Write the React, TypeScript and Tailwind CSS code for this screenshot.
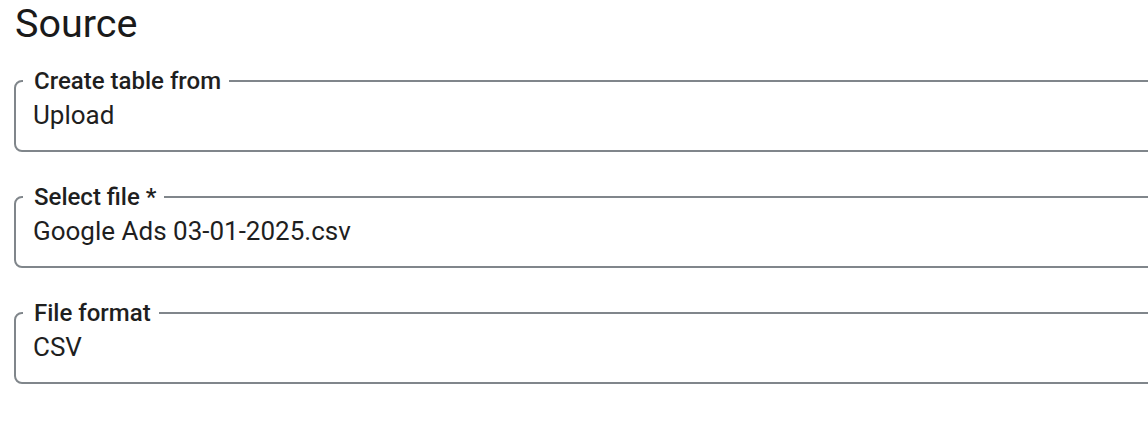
import React from 'react';

const fields = [
  { label: 'Create table from', value: 'Upload' },
  { label: 'Select file *', value: 'Google Ads 03-01-2025.csv' },
  { label: 'File format', value: 'CSV' },
];

const OutlinedField: React.FC<{ label: string; value: string }> = ({ label, value }) => (
  <fieldset className="w-[1180px] h-[85px] border-2 border-[#80868b] rounded-[8px] pl-[7px] m-0">
    <legend className="pl-[11px] pr-[8px] text-[24px] leading-[28px] font-medium text-[#1f1f1f]">
      {label}
    </legend>
    <div className="pl-[10px] pt-[5px] text-[26px] leading-[30px] text-[#1f1f1f]">{value}</div>
  </fieldset>
);

const App: React.FC = () => {
  return (
    <div className="w-[1148px] h-[444px] overflow-hidden bg-white font-['Roboto',sans-serif]">
      <div className="pl-[14px]">
        <h1 className="text-[39.5px] leading-[47px] font-normal text-[#1a1a1a] pl-[1px]">Source</h1>
        <div className="flex flex-col gap-[31px] mt-[20px]">
          {fields.map((f) => (
            <OutlinedField key={f.label} label={f.label} value={f.value} />
          ))}
        </div>
      </div>
    </div>
  );
};

export default App;
